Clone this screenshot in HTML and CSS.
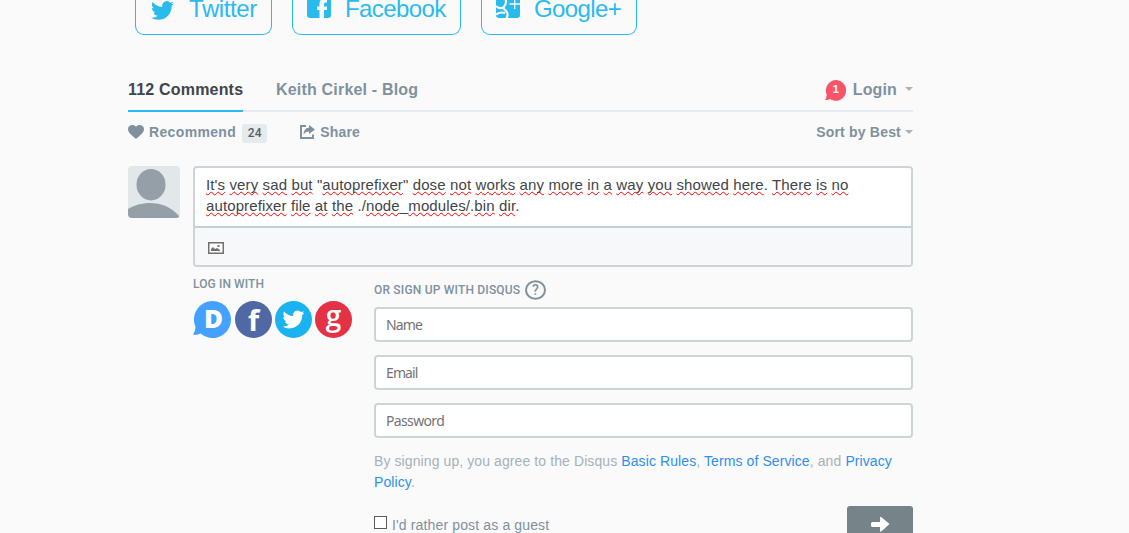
FILE: index.html
```
<!DOCTYPE html>
<html lang="en">
<head>
<meta charset="utf-8">
<title>Comments</title>
<link rel="stylesheet" href="styles.css">
</head>
<body>
<svg class="defs" width="0" height="0" aria-hidden="true">
  <symbol id="bird" viewBox="0 0 24 24"><path d="M23.953 4.57a10 10 0 01-2.825.775 4.958 4.958 0 002.163-2.723c-.951.555-2.005.959-3.127 1.184a4.92 4.92 0 00-8.384 4.482C7.69 8.095 4.067 6.13 1.64 3.162a4.822 4.822 0 00-.666 2.475c0 1.71.87 3.213 2.188 4.096a4.904 4.904 0 01-2.228-.616v.06a4.923 4.923 0 003.946 4.827 4.996 4.996 0 01-2.212.085 4.936 4.936 0 004.604 3.417 9.867 9.867 0 01-6.102 2.105c-.39 0-.779-.023-1.17-.067a13.995 13.995 0 007.557 2.209c9.053 0 13.998-7.496 13.998-13.985 0-.21 0-.42-.015-.63A9.935 9.935 0 0024 4.59z"/></symbol>
</svg>
<div class="share-row">
  <a class="share twitter"><svg width="24" height="24"><use href="#bird"/></svg><span>Twitter</span></a>
  <a class="share facebook"><svg width="24" height="24" viewBox="0 0 24 24"><path fill-rule="evenodd" d="M3 0H21Q24 0 24 3V21Q24 24 21 24H17V16H20V12.500H17V10Q17 8.500 18.500 8.500H20V5H17Q12.500 5 12.500 9.500V12.500H10V16H12.500V24H3Q0 24 0 21V3Q0 0 3 0Z"/></svg><span>Facebook</span></a>
  <a class="share google"><svg width="24" height="24" viewBox="0 0 24 24"><rect width="24" height="24" rx="3"/><g fill="none" stroke="#fafafa"><path stroke-width="1.300" d="M13.500 10H24M18.700 4V15"/><path stroke-width="2.200" d="M9.500 4Q11 10 8 12.500Q7 14.500 10 17Q13 20 10.500 24M0 12Q3 15.500 7 13.500M0 20.500Q4 17.500 9 19"/></g></svg><span>Google+</span></a>
</div>
<main class="thread">
  <header class="tabs">
    <div class="tab active"><span class="t-count">112 Comments</span></div>
    <div class="tab blog"><span class="t-blog">Keith Cirkel - Blog</span></div>
    <div class="login"><span class="notice"><svg width="22" height="22" viewBox="0 0 22 22"><path d="M11.300 0A10.400 10.400 0 1 1 5 19.100Q3 20.400 0 20Q1.600 18 1.700 14.500A10.400 10.400 0 0 1 11.300 0Z"/><text x="11" y="12.500" text-anchor="middle">1</text></svg></span><span class="t-login">Login</span><i class="caret"></i></div>
  </header>
  <div class="actions">
    <svg width="16" height="14" viewBox="0 0 16 14"><path d="M8 14C6 11.800 0 8.500 0 4C0 .4 5.500-1.500 8 1.800C10.500-1.500 16 .4 16 4C16 8.500 10 11.800 8 14Z"/></svg>
    <span class="t-rec">Recommend</span><span class="badge">24</span>
    <svg class="share-icon" width="15" height="14" viewBox="0 0 15 14"><path d="M0 0H6V2H2V12H12V9.500H14V14H0ZM9 0L15 4.500L9 9V6.500Q5.500 6.300 3.500 9.500Q3.800 3.200 9 2.700Z"/></svg>
    <span class="t-share">Share</span>
    <div class="sort"><span class="t-sort">Sort by Best</span><i class="caret"></i></div>
  </div>
  <div class="compose">
    <svg class="avatar" width="52" height="52" viewBox="0 0 52 52"><rect width="52" height="52" fill="#e2e7e9"/><ellipse cx="23" cy="18.700" rx="14.500" ry="15.700"/><path d="M0 43C14 34 38 34 51 50V52H0Z"/></svg>
    <div class="editor">
      <div class="message"><p class="l1"><u>It's</u> <u>very</u> <u>sad</u> <u>but</u> "<u>autoprefixer</u>" <u>dose</u> <u>not</u> <u>works</u> <u>any</u> <u>more</u> <u>in</u> <u>a</u> <u>way</u> <u>you</u> <u>showed</u> <u>here</u>. <u>There</u> <u>is</u> <u>no</u></p><p class="l2"><u>autoprefixer</u> <u>file</u> <u>at</u> <u>the</u> ./<u>node</u>_<u>modules/</u>.<u>bin</u> <u>dir</u>.</p></div>
      <div class="tools"><svg width="16" height="12" viewBox="0 0 16 12"><rect x=".75" y=".75" width="14.500" height="10.500" fill="#fff" stroke="#717171" stroke-width="1.500"/><path fill="#717171" d="M3 9V7L5 5L7 7L9 6L12 8V9ZM9.500 3H11.500V5H9.500Z"/></svg></div>
    </div>
  </div>
  <div class="auth">
    <section class="social">
      <h6 class="t-log">LOG IN WITH</h6>
      <div class="logos">
        <svg width="39" height="37" viewBox="0 0 39 37"><path fill="#44a1ff" d="M19.500 0A18.500 18.500 0 1 1 7.500 32.600Q4 34.500 0 33.500Q2.500 30 2.500 26A18.500 18.500 0 0 1 19.500 0Z"/><text class="d" x="20.500" y="27" text-anchor="middle" textLength="19" lengthAdjust="spacingAndGlyphs">D</text></svg>
        <svg class="fb" width="37" height="37"><circle cx="18.500" cy="18.500" r="18.500" fill="#5068a3"/><text class="f" x="18.500" y="30" text-anchor="middle">f</text></svg>
        <svg class="tw" width="37" height="37"><circle cx="18.500" cy="18.500" r="18.500" fill="#1ab2f0"/><use href="#bird" x="7.500" y="7.500" width="22" height="22" fill="#fff"/></svg>
        <svg class="gg" width="37" height="37"><circle cx="18.500" cy="18.500" r="18.500" fill="#e33145"/><text class="g" x="18.500" y="24.500" text-anchor="middle">g</text></svg>
      </div>
    </section>
    <section class="signup">
      <h6 class="signup-title"><span class="t-sign">OR SIGN UP WITH DISQUS</span><svg width="21" height="20"><ellipse cx="10.500" cy="10" rx="9.500" ry="8.800"/><text x="10.500" y="14.500" text-anchor="middle">?</text></svg></h6>
      <div class="field"><span class="t-name">Name</span></div>
      <div class="field"><span class="t-email">Email</span></div>
      <div class="field"><span class="t-pass">Password</span></div>
      <p class="terms"><span class="t-terms">By signing up, you agree to the Disqus <a>Basic Rules</a>, <a>Terms of Service</a>, and <a>Privacy</a></span><br><a>Policy</a>.</p>
      <div class="submit-row"><i class="checkbox"></i><span class="t-guest">I'd rather post as a guest</span><button class="submit"><svg width="19" height="17" viewBox="0 0 19 17"><path d="M1.500 6H9V2Q9 0 10.500 1.200L18.500 8L10.500 15.300Q9 16.500 9 14.500V11H1.500Q0 11 0 9.500V7.500Q0 6 1.500 6Z"/></svg></button></div>
    </section>
  </div>
</main>
</body>
</html>
```
FILE: styles.css
```
* { box-sizing: border-box; }
body { margin: 0; height: 533px; overflow: hidden; background: #fafafa; font-family: "Liberation Sans", Arial, sans-serif; color: #7f919e; }
svg { display: block; flex: none; }
.defs { position: absolute; }
p, h6 { margin: 0; }
span { white-space: nowrap; }

.share-row { display: flex; gap: 20px; padding-left: 135px; height: 35px; }
.share { display: flex; height: 35px; border: 1px solid #2abbee; border-top: 0; border-radius: 0 0 9px 9px; color: #2abbee; fill: #2abbee; font-size: 24px; line-height: 18px; }
.share svg { margin: -6px 14px 0 14px; }
.share.twitter svg { width: 23px; height: 23px; margin: -1px 15px 0; }
.twitter { width: 137px; }
.facebook { width: 169px; }
.google { width: 156px; }
.share span { letter-spacing: -.6px; }
.share.twitter span { letter-spacing: -.4px; }

.thread { width: 785px; margin: 31px 0 0 128px; }
.tabs { display: flex; height: 46px; border-bottom: 2px solid #e5eaed; font-size: 16px; font-weight: bold; line-height: 47px; }
.tab { height: 46px; letter-spacing: .19px; }
.active { width: 115px; margin-right: 33px; border-bottom: 2px solid #2abbee; color: #3f4549; }
.login { display: flex; align-items: center; height: 46px; margin-left: auto; letter-spacing: .15px; }
.notice { margin: 3px 6px 0 0; fill: #f9546a; }
.notice text { fill: #fff; font-size: 11px; font-weight: bold; }
.caret { width: 8px; margin-left: 8px; border: 4px solid transparent; border-top-color: #adb1b3; border-bottom: 0; }

.actions { display: flex; align-items: center; height: 40px; font-size: 14px; font-weight: bold; fill: #7f919e; letter-spacing: .2px; }
.t-rec { letter-spacing: .35px; }
.actions > svg { margin-right: 5px; }
.badge { width: 25px; height: 19px; margin: 2px 33px 0 6px; border-radius: 3px; background: #e5eaed; color: #555e65; font: 500 12px/19px Roboto, sans-serif; text-align: center; }
.sort { display: flex; align-items: center; margin-left: auto; }
.sort .caret { margin-left: 4px; }

.compose { display: flex; gap: 13px; margin-top: 14px; }
.avatar { border-radius: 4px; fill: #949fa8; }
.editor { width: 720px; height: 101px; border: 2px solid #ccd4d8; border-radius: 4px; overflow: hidden; background: #fff; }
.message { height: 60px; padding: 6px 11px; border-bottom: 2px solid #c5d0d5; color: #3f4549; font-size: 15px; line-height: 21px; letter-spacing: .116px; white-space: nowrap; }
.message u { text-decoration: underline wavy #f00 1px; text-decoration-skip-ink: none; text-underline-offset: 1px; }
.tools { height: 37px; padding: 14px 13px; background: #f6f8f9; }

.auth { display: flex; }
.social { flex: none; width: 246px; padding-left: 65px; }
h6 { font: 500 12px/14px Roboto, sans-serif; }
.t-log { margin-top: 10px; letter-spacing: .1px; white-space: nowrap; }
.logos { display: flex; gap: 3px; margin-top: 10px; }
.logos text { fill: #fff; font-family: "Open Sans", sans-serif; font-weight: bold; }
.logos .d { font-size: 24px; font-weight: 800; }
.logos .f { font-size: 29px; }
.logos .g { font-size: 28px; font-weight: 600; }
.signup { width: 539px; }
.signup-title { display: flex; align-items: center; height: 20px; margin: 13px 0 7px; letter-spacing: .19px; }
.signup-title svg { margin-left: 5px; fill: none; stroke: #7f919e; stroke-width: 2; }
.signup-title text { fill: #7f919e; stroke: none; font: 500 14px Roboto, sans-serif; }
.field { height: 35px; margin-bottom: 13px; padding-left: 10px; border: 2px solid #ccd4d8; border-radius: 4px; background: #fff; color: #737373; font: 14px/31px "Noto Sans", sans-serif; letter-spacing: -.65px; }
.t-name, .t-email { letter-spacing: -.9px; }
.terms { color: #a5b2bb; font-size: 14px; line-height: 21px; letter-spacing: .095px; white-space: nowrap; }
.terms a { color: #2e8fec; }
.submit-row { display: flex; height: 40px; margin-top: 13px; font-size: 14px; line-height: 39px; letter-spacing: .14px; }
.checkbox { width: 13px; height: 13px; margin: 10px 5px 0 0; border: 1px solid #5c5c5c; background: #fff; }
.submit { width: 66px; height: 40px; margin-left: auto; padding: 10px 0 0 24px; border: 0; border-radius: 3px; background: #768389; fill: #fff; display: block; }
.submit svg { margin-bottom: 13px; }
```
